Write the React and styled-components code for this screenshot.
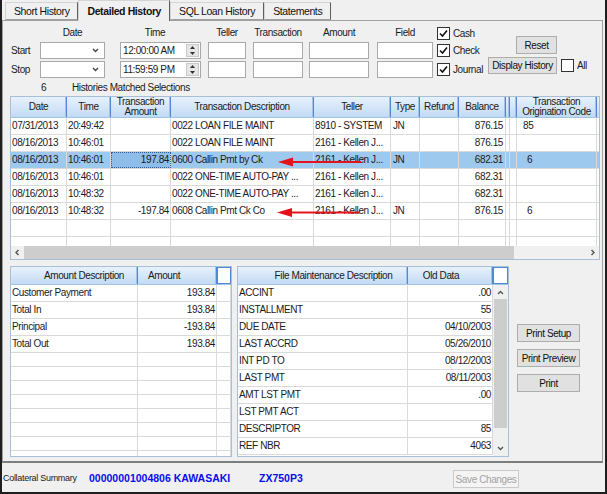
import styled, { createGlobalStyle } from 'styled-components'

const FONT = '"Liberation Sans", Arial, sans-serif'

const GlobalStyle = createGlobalStyle`
    * { box-sizing: border-box; }
    html, body { margin: 0; padding: 0; background: #f0f0f0; }
    body { font-family: ${FONT}; font-size: 10px; letter-spacing: -0.4px; color: #1a1a1a; }
`

const Window = styled.div`
    width: 607px;
    height: 494px;
    display: flex;
    flex-direction: column;
    background: #f0f0f0;
    border: 2px solid #1e1e1e;
    border-top: none;
    overflow: hidden;
`

const TabStrip = styled.div`
    display: flex;
    align-items: flex-end;
    height: 20px;
    padding-left: 3px;
    position: relative;
    z-index: 1;
    flex: none;
`

const Tab = styled.div`
    height: ${p => p.$active ? '21px' : '18px'};
    margin-bottom: ${p => p.$active ? '-1px' : '0'};
    padding: 0 8px;
    display: flex;
    align-items: center;
    background: #f0f0f0;
    border: 1px solid #d4d4d4;
    border-right: 1px solid #5e5e5e;
    border-bottom: ${p => p.$active ? 'none' : '1px solid #a0a0a0'};
    font-weight: ${p => p.$active ? 700 : 400};
    font-size: 10.5px;
    color: #111;
    white-space: nowrap;
`

const Panel = styled.div`
    margin-right: 2px;
    border: 1px solid #a0a0a0;
    border-bottom: 2px solid #7d7d7d;
    padding: 4px 2px 4px 7px;
    display: flex;
    flex-direction: column;
    flex: none;
`

const Filters = styled.div`
    display: grid;
    grid-template-columns: 30px 80px 88px 45px 56px 68px 60px 51px 1fr;
    grid-template-rows: 15px 17px 17px;
    row-gap: 2px;
`

const ColLabel = styled.div`
    width: ${p => p.$w}px;
    text-align: center;
    line-height: 15px;
`

const RowLabel = styled.div`
    line-height: 17px;
    padding-left: 1px;
`

const TextBox = styled.div`
    width: ${p => p.$w}px;
    height: 17px;
    background: #fff;
    border: 1px solid #a9a9a9;
    display: flex;
    align-items: center;
    justify-content: ${p => p.$end ? 'flex-end' : 'space-between'};
    padding: 0 ${p => p.$end ? '5px' : '1px'} 0 2px;
    white-space: nowrap;
`

const Spinner = styled.div`
    width: 13px;
    height: 13px;
    background: #e6e6e6;
    border: 1px solid #c9c9c9;
    display: flex;
    flex-direction: column;
    align-items: center;
    justify-content: space-around;
    flex: none;
`

const CheckRow = styled.label`
    display: flex;
    align-items: center;
    gap: 3px;
    align-self: ${p => p.$align || 'center'};
    white-space: nowrap;
`

const Box = styled.span`
    width: 13px;
    height: 13px;
    background: #fff;
    border: 1px solid #333;
    display: flex;
    align-items: center;
    justify-content: center;
    flex: none;
`

const ButtonsArea = styled.div`
    grid-row: span 3;
    display: flex;
    flex-direction: column;
    align-items: flex-start;
    gap: 3px;
    padding-top: 11px;
`

const Button = styled.div`
    width: ${p => p.$w}px;
    height: ${p => p.$h || 18}px;
    margin-left: ${p => p.$ml || 0}px;
    display: flex;
    align-items: center;
    justify-content: center;
    background: ${p => p.$disabled ? '#f4f4f4' : '#e1e1e1'};
    border: 1px solid ${p => p.$disabled ? '#cacaca' : '#adadad'};
    color: ${p => p.$disabled ? '#a3a3a3' : '#111'};
    white-space: nowrap;
    flex: none;
`

const InlineRow = styled.div`
    display: flex;
    align-items: center;
    gap: 4px;
`

const CountLine = styled.div`
    display: flex;
    align-items: center;
    height: 15px;
    margin-top: 2px;
`

const Count = styled.span`
    margin-left: 31px;
    width: 31px;
`

const GridFrame = styled.div`
    position: relative;
    height: ${p => p.$h}px;
    width: ${p => p.$w ? `${p.$w}px` : 'auto'};
    margin-top: ${p => p.$mt || 0}px;
    margin-left: ${p => p.$ml || 0}px;
    background: #fff;
    border: 1px solid #a7c0d8;
    display: flex;
    flex-direction: column;
    flex: none;
`

const HeadRow = styled.div`
    display: grid;
    grid-template-columns: ${p => p.$cols};
    height: ${p => p.$h}px;
    background: linear-gradient(#e7f1fc, #d3e5f8 55%, #c2daf4);
    border-bottom: 1px solid #a4c4e6;
    flex: none;
`

const HeadCell = styled.div`
    display: flex;
    align-items: center;
    justify-content: ${p => p.$justify || 'center'};
    text-align: center;
    white-space: pre-line;
    line-height: 10px;
    padding: ${p => p.$pad || '0'};
    border-right: 1px solid #4f8ad0;
    box-shadow: inset -1px 0 0 #9fc3ec;
    overflow: hidden;
    color: #1a1a1a;
    ${p => p.$blank && `
        background: #fff;
        border: 1px solid #4f8ad0;
        box-shadow: none;
    `}
`

const Body = styled.div`
    flex: 1;
    min-height: 0;
    overflow: hidden;
    display: flex;
`

const Rows = styled.div`
    flex: 1;
    min-width: 0;
    display: flex;
    flex-direction: column;
`

const Row = styled.div`
    display: grid;
    grid-template-columns: ${p => p.$cols};
    height: ${p => p.$h || 17}px;
    background: ${p => p.$selected ? '#9dc9ef' : '#fff'};
    border-bottom: 1px solid #dadada;
    flex: none;
`

const Cell = styled.div`
    padding: 0 ${p => p.$pr ?? 2}px 0 ${p => p.$pl ?? 2}px;
    line-height: 16px;
    white-space: nowrap;
    overflow: hidden;
    text-align: ${p => p.$right ? 'right' : 'left'};
    border-right: 1px solid #dadada;
    color: #1c1a24;
    ${p => p.$focus && `
        background: #8fbde9;
        outline: 1px dotted #2b5d99;
        outline-offset: -1px;
    `}
`

const HScroll = styled.div`
    display: flex;
    height: 13px;
    background: #f0f0f0;
    flex: none;
`

const ScrollArrow = styled.div`
    width: ${p => p.$w || 13}px;
    height: ${p => p.$h || 13}px;
    display: flex;
    align-items: center;
    justify-content: center;
    flex: none;
`

const HThumb = styled.div`
    width: ${p => p.$w}px;
    background: #cdcdcd;
    flex: none;
`

const Track = styled.div`
    flex: 1;
`

const VScroll = styled.div`
    width: 15px;
    display: flex;
    flex-direction: column;
    background: #f0f0f0;
    flex: none;
`

const VThumb = styled.div`
    height: ${p => p.$h}px;
    margin: 0 1px;
    background: #cdcdcd;
    flex: none;
`

const Annotations = styled.svg`
    position: absolute;
    left: 0;
    top: 0;
    pointer-events: none;
`

const BottomSection = styled.div`
    display: flex;
    margin-top: 6px;
    height: 191px;
`

const PrintColumn = styled.div`
    display: flex;
    flex-direction: column;
    gap: 7px;
    padding-top: 58px;
    margin-left: 8px;
`

const Footer = styled.div`
    flex: 1;
    display: flex;
    align-items: center;
    padding-left: 1px;
`

const FooterLabel = styled.span`
    width: 86px;
    font-size: 9px;
    letter-spacing: -0.3px;
    white-space: nowrap;
`

const FooterValue = styled.span`
    width: ${p => p.$w}px;
    color: #0b0bec;
    font-weight: 700;
    font-size: 10.5px;
    letter-spacing: 0;
    white-space: nowrap;
`

const Chevron = ({ dir = 'down', size = 7, color = '#444' }) => {
    const pts = {
        down: '1,2 3.5,4.5 6,2',
        up: '1,5 3.5,2.5 6,5',
        left: '4.5,1 2,3.5 4.5,6',
        right: '2.5,1 5,3.5 2.5,6',
    }[dir]
    return (
        <svg width={size} height={size} viewBox="0 0 7 7">
            <polyline points={pts} fill="none" stroke={color} strokeWidth="1.4" />
        </svg>
    )
}

const Tick = () => (
    <svg width="9" height="9" viewBox="0 0 9 9">
        <polyline points="1,4.5 3.5,7 8,1.5" fill="none" stroke="#111" strokeWidth="1.6" />
    </svg>
)

const Check = ({ label, checked, align }) => (
    <CheckRow $align={align}>
        <Box>{checked && <Tick />}</Box>
        {label}
    </CheckRow>
)

const Tri = ({ up }) => (
    <svg width="5" height="3" viewBox="0 0 5 3">
        <polygon points={up ? '0,3 2.5,0 5,3' : '0,0 2.5,3 5,0'} fill="#333" />
    </svg>
)

const MAIN_COLS = '56px 44px 60px 143px 77px 29px 39px 47px 4px 7px 80px 1fr'
const AMOUNT_COLS = '127px 79px 1fr'
const FILE_COLS = '170px 85px'

const history = [
    { date: '07/31/2013', time: '20:49:42', amt: '', desc: '0022 LOAN FILE MAINT', teller: '8910 - SYSTEM', type: 'JN', bal: '876.15', code: '85' },
    { date: '08/16/2013', time: '10:46:01', amt: '', desc: '0022 LOAN FILE MAINT', teller: '2161 - Kellen J...', type: '', bal: '876.15', code: '' },
    { date: '08/16/2013', time: '10:46:01', amt: '197.84', desc: '0600 Callin Pmt by Ck', teller: '2161 - Kellen J...', type: 'JN', bal: '682.31', code: '6', selected: true },
    { date: '08/16/2013', time: '10:46:01', amt: '', desc: '0022 ONE-TIME AUTO-PAY ...', teller: '2161 - Kellen J...', type: '', bal: '682.31', code: '' },
    { date: '08/16/2013', time: '10:48:32', amt: '', desc: '0022 ONE-TIME AUTO-PAY ...', teller: '2161 - Kellen J...', type: '', bal: '682.31', code: '' },
    { date: '08/16/2013', time: '10:48:32', amt: '-197.84', desc: '0608 Callin Pmt Ck Co', teller: '2161 - Kellen J...', type: 'JN', bal: '876.15', code: '6' },
]

const amounts = [
    ['Customer Payment', '193.84'],
    ['Total In', '193.84'],
    ['Principal', '-193.84'],
    ['Total Out', '193.84'],
]

const fileData = [
    ['ACCINT', '.00'],
    ['INSTALLMENT', '55'],
    ['DUE DATE', '04/10/2003'],
    ['LAST ACCRD', '05/26/2010'],
    ['INT PD TO', '08/12/2003'],
    ['LAST PMT', '08/11/2003'],
    ['AMT LST PMT', '.00'],
    ['LST PMT ACT', ''],
    ['DESCRIPTOR', '85'],
    ['REF NBR', '4063'],
]

const mainHeaders = [
    'Date', 'Time', 'Transaction\nAmount', 'Transaction Description', 'Teller',
    'Type', 'Refund', 'Balance', '', '', 'Transaction\nOrigination Code',
]

const RedArrow = ({ tip, end, y }) => (
    <g>
        <line x1={tip + 10} y1={y} x2={end} y2={y} stroke="#e3121b" strokeWidth="2" />
        <polygon points={`${tip},${y} ${tip + 15},${y - 4.5} ${tip + 15},${y + 4.5}`} fill="#e3121b" />
    </g>
)

const TimeField = ({ value }) => (
    <TextBox $w={81}>
        {value}
        <Spinner><Tri up /><Tri /></Spinner>
    </TextBox>
)

const FilterRow = ({ label, time, check, align }) => (
    <>
        <RowLabel>{label}</RowLabel>
        <TextBox $w={65} $end><Chevron /></TextBox>
        <TimeField value={time} />
        <TextBox $w={38} />
        <TextBox $w={50} />
        <TextBox $w={60} />
        <TextBox $w={56} />
        <Check label={check} checked align={align} />
    </>
)

const App = () => {
    return (
        <Window>
            <GlobalStyle />
            <TabStrip>
                <Tab>Short History</Tab>
                <Tab $active>Detailed History</Tab>
                <Tab>SQL Loan History</Tab>
                <Tab>Statements</Tab>
            </TabStrip>
            <Panel>
                <Filters>
                    <div />
                    <ColLabel $w={65}>Date</ColLabel>
                    <ColLabel $w={70}>Time</ColLabel>
                    <ColLabel $w={38}>Teller</ColLabel>
                    <ColLabel $w={50}>Transaction</ColLabel>
                    <ColLabel $w={60}>Amount</ColLabel>
                    <ColLabel $w={56}>Field</ColLabel>
                    <Check label="Cash" checked align="end" />
                    <ButtonsArea>
                        <Button $w={41} $ml={28}>Reset</Button>
                        <InlineRow>
                            <Button $w={69} $h={17}>Display History</Button>
                            <Check label="All" />
                        </InlineRow>
                    </ButtonsArea>
                    <FilterRow label="Start" time="12:00:00 AM" check="Check" />
                    <FilterRow label="Stop" time="11:59:59 PM" check="Journal" />
                </Filters>

                <CountLine>
                    <Count>6</Count>
                    Histories Matched Selections
                </CountLine>

                <GridFrame $h={164} $mt={1}>
                    <HeadRow $cols={MAIN_COLS} $h={21}>
                        {mainHeaders.map((h, i) => <HeadCell key={i}>{h}</HeadCell>)}
                        <div />
                    </HeadRow>
                    <Body>
                        <Rows>
                            {history.map((r, i) => (
                                <Row key={i} $cols={MAIN_COLS} $selected={r.selected}>
                                    <Cell $pl={1}>{r.date}</Cell>
                                    <Cell $pl={1}>{r.time}</Cell>
                                    <Cell $right $pr={1} $focus={r.selected}>{r.amt}</Cell>
                                    <Cell $pl={1}>{r.desc}</Cell>
                                    <Cell $pl={1}>{r.teller}</Cell>
                                    <Cell>{r.type}</Cell>
                                    <Cell />
                                    <Cell $right>{r.bal}</Cell>
                                    <Cell $pl={0} $pr={0} />
                                    <Cell $pl={0} $pr={0} />
                                    <Cell $pl={r.code.length > 1 ? 6 : 10}>{r.code}</Cell>
                                    <div />
                                </Row>
                            ))}
                            {[0, 1].map(i => (
                                <Row key={`e${i}`} $cols={MAIN_COLS}>
                                    {mainHeaders.map((_, j) => <Cell key={j} $pl={0} $pr={0} />)}
                                    <div />
                                </Row>
                            ))}
                        </Rows>
                    </Body>
                    <HScroll>
                        <ScrollArrow><Chevron dir="left" color="#555" /></ScrollArrow>
                        <HThumb $w={490} />
                        <Track />
                        <ScrollArrow><Chevron dir="right" color="#555" /></ScrollArrow>
                    </HScroll>
                    <Annotations width="590" height="164">
                        <RedArrow tip={267} end={350} y={65} />
                        <RedArrow tip={266} end={349} y={115.5} />
                    </Annotations>
                </GridFrame>

                <BottomSection>
                    <GridFrame $h={191} $w={222}>
                        <HeadRow $cols={AMOUNT_COLS} $h={18}>
                            <HeadCell $pad="0 0 0 20px">Amount Description</HeadCell>
                            <HeadCell $justify="flex-start" $pad="0 0 0 10px">Amount</HeadCell>
                            <HeadCell $blank />
                        </HeadRow>
                        <Body>
                            <Rows>
                                {amounts.map(([d, a]) => (
                                    <Row key={d} $cols={AMOUNT_COLS}>
                                        <Cell $pl={1}>{d}</Cell>
                                        <Cell $right $pr={1}>{a}</Cell>
                                        <Cell />
                                    </Row>
                                ))}
                                {[0, 1, 2, 3, 4, 5, 6, 7].map(i => (
                                    <Row key={`e${i}`} $cols={AMOUNT_COLS} $h={14}>
                                        <Cell /><Cell /><Cell />
                                    </Row>
                                ))}
                            </Rows>
                        </Body>
                    </GridFrame>

                    <GridFrame $h={191} $w={272} $ml={5}>
                        <HeadRow $cols={`${FILE_COLS} 1fr`} $h={18}>
                            <HeadCell $pad="0 0 0 22px">File Maintenance Description</HeadCell>
                            <HeadCell $pad="0 18px 0 0">Old Data</HeadCell>
                            <HeadCell $blank />
                        </HeadRow>
                        <Body>
                            <Rows>
                                {fileData.map(([d, v]) => (
                                    <Row key={d} $cols={FILE_COLS}>
                                        <Cell $pl={1}>{d}</Cell>
                                        <Cell $right $pr={1}>{v}</Cell>
                                    </Row>
                                ))}
                            </Rows>
                            <VScroll>
                                <ScrollArrow $w={15} $h={14}><Chevron dir="up" color="#555" /></ScrollArrow>
                                <VThumb $h={129} />
                                <Track />
                                <ScrollArrow $w={15} $h={15}><Chevron dir="down" color="#555" /></ScrollArrow>
                            </VScroll>
                        </Body>
                    </GridFrame>

                    <PrintColumn>
                        <Button $w={63}>Print Setup</Button>
                        <Button $w={63}>Print Preview</Button>
                        <Button $w={63}>Print</Button>
                    </PrintColumn>
                </BottomSection>
            </Panel>

            <Footer>
                <FooterLabel>Collateral Summary</FooterLabel>
                <FooterValue $w={170}>00000001004806 KAWASAKI</FooterValue>
                <FooterValue $w={194}>ZX750P3</FooterValue>
                <Button $w={66} $disabled style={{ marginTop: 3 }}>Save Changes</Button>
            </Footer>
        </Window>
    )
}

export default App
